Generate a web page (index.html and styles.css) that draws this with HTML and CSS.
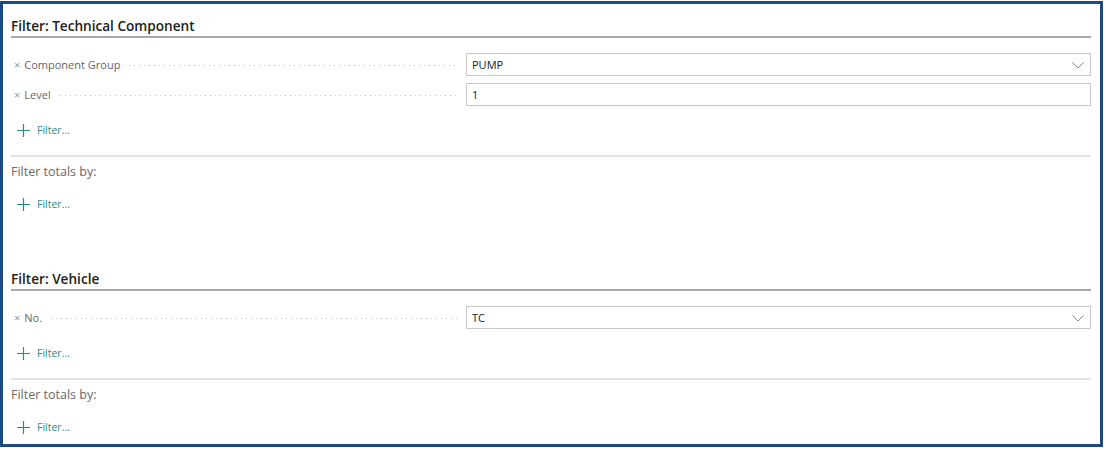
FILE: index.html
```html
<!DOCTYPE html>
<html lang="en">
<head>
  <meta charset="UTF-8">
  <meta name="viewport" content="width=device-width, initial-scale=1.0">
  <title>Filter</title>
  <link rel="stylesheet" href="styles.css">
</head>
<body>
  <div class="panel">
    <section class="filter-group">
      <h2 class="group-title">Filter: Technical Component</h2>
      <div class="fields">
        <div class="field">
          <div class="field-label"><span class="remove">×</span><span class="name">Component Group</span><span class="leader"></span></div>
          <div class="field-input">
            <span>PUMP</span>
            <svg class="chevron" width="12" height="7" viewBox="0 0 12 7"><path d="M0.5 0.5 L6 6 L11.5 0.5" fill="none" stroke="#8a8a8a" stroke-width="1"/></svg>
          </div>
        </div>
        <div class="field">
          <div class="field-label"><span class="remove">×</span><span class="name">Level</span><span class="leader"></span></div>
          <div class="field-input"><span>1</span></div>
        </div>
      </div>
      <a class="add-filter" href="#">
        <svg width="13" height="13" viewBox="0 0 13 13"><path d="M6.5 0 V13 M0 6.5 H13" stroke="currentColor" stroke-width="1.2"/></svg>
        <span>Filter...</span>
      </a>
      <div class="totals">
        <div class="totals-title">Filter totals by:</div>
        <a class="add-filter" href="#">
          <svg width="13" height="13" viewBox="0 0 13 13"><path d="M6.5 0 V13 M0 6.5 H13" stroke="currentColor" stroke-width="1.2"/></svg>
          <span>Filter...</span>
        </a>
      </div>
    </section>

    <section class="filter-group">
      <h2 class="group-title">Filter: Vehicle</h2>
      <div class="fields">
        <div class="field">
          <div class="field-label"><span class="remove">×</span><span class="name">No.</span><span class="leader"></span></div>
          <div class="field-input">
            <span>TC</span>
            <svg class="chevron" width="12" height="7" viewBox="0 0 12 7"><path d="M0.5 0.5 L6 6 L11.5 0.5" fill="none" stroke="#8a8a8a" stroke-width="1"/></svg>
          </div>
        </div>
      </div>
      <a class="add-filter" href="#">
        <svg width="13" height="13" viewBox="0 0 13 13"><path d="M6.5 0 V13 M0 6.5 H13" stroke="currentColor" stroke-width="1.2"/></svg>
        <span>Filter...</span>
      </a>
      <div class="totals">
        <div class="totals-title">Filter totals by:</div>
        <a class="add-filter" href="#">
          <svg width="13" height="13" viewBox="0 0 13 13"><path d="M6.5 0 V13 M0 6.5 H13" stroke="currentColor" stroke-width="1.2"/></svg>
          <span>Filter...</span>
        </a>
      </div>
    </section>
  </div>
</body>
</html>
```

FILE: styles.css
```css
body {
  margin: 0;
  padding: 0;
  background: #fff;
  font-family: "Open Sans", "Noto Sans", sans-serif;
  color: #212121;
}
.panel {
  box-sizing: border-box;
  width: 1103px;
  height: 446px;
  margin-top: 1px;
  border: 3px solid #1b4b80;
  padding: 0 9px 0 8px;
}
.filter-group + .filter-group {
  margin-top: 43px;
}
.group-title {
  margin: 0;
  padding: 12px 0 0 0;
  line-height: 20px;
  font-size: 13.6px;
  font-weight: 600;
  color: #212121;
  border-bottom: 2px solid #a8a8a8;
}
.fields {
  margin-top: 15px;
}
.field {
  display: grid;
  grid-template-columns: 1fr 625px;
  column-gap: 9px;
  height: 23px;
}
.field + .field {
  margin-top: 7px;
}
.field-label {
  display: flex;
  align-items: center;
  font-size: 11px;
  color: #666;
  padding-left: 3px;
}
.remove {
  font-size: 11px;
  color: #9a9a9a;
  margin-right: 4px;
}
.leader {
  flex: 1;
  height: 1px;
  margin: 2px 0 0 9px;
  background-image: linear-gradient(to right, #c4c4c4 1px, transparent 1px);
  background-size: 5px 1px;
  background-repeat: repeat-x;
}
.field-input {
  box-sizing: border-box;
  display: flex;
  align-items: center;
  justify-content: space-between;
  border: 1px solid #c8c8c8;
  padding: 0 6px 0 5px;
  font-size: 11px;
  color: #212121;
}
.chevron {
  margin-top: 1px;
}
.add-filter {
  display: flex;
  align-items: center;
  gap: 7px;
  height: 20px;
  margin-top: 14px;
  padding-left: 6px;
  font-size: 10.5px;
  color: #2b8a88;
  text-decoration: none;
}
.totals {
  margin-top: 15px;
  border-top: 2px solid #e4e4e4;
  padding-top: 5px;
}
.totals .add-filter {
  margin-top: 12px;
}
.totals-title {
  line-height: 20px;
  font-size: 12.5px;
  color: #6a6a6a;
}
```
